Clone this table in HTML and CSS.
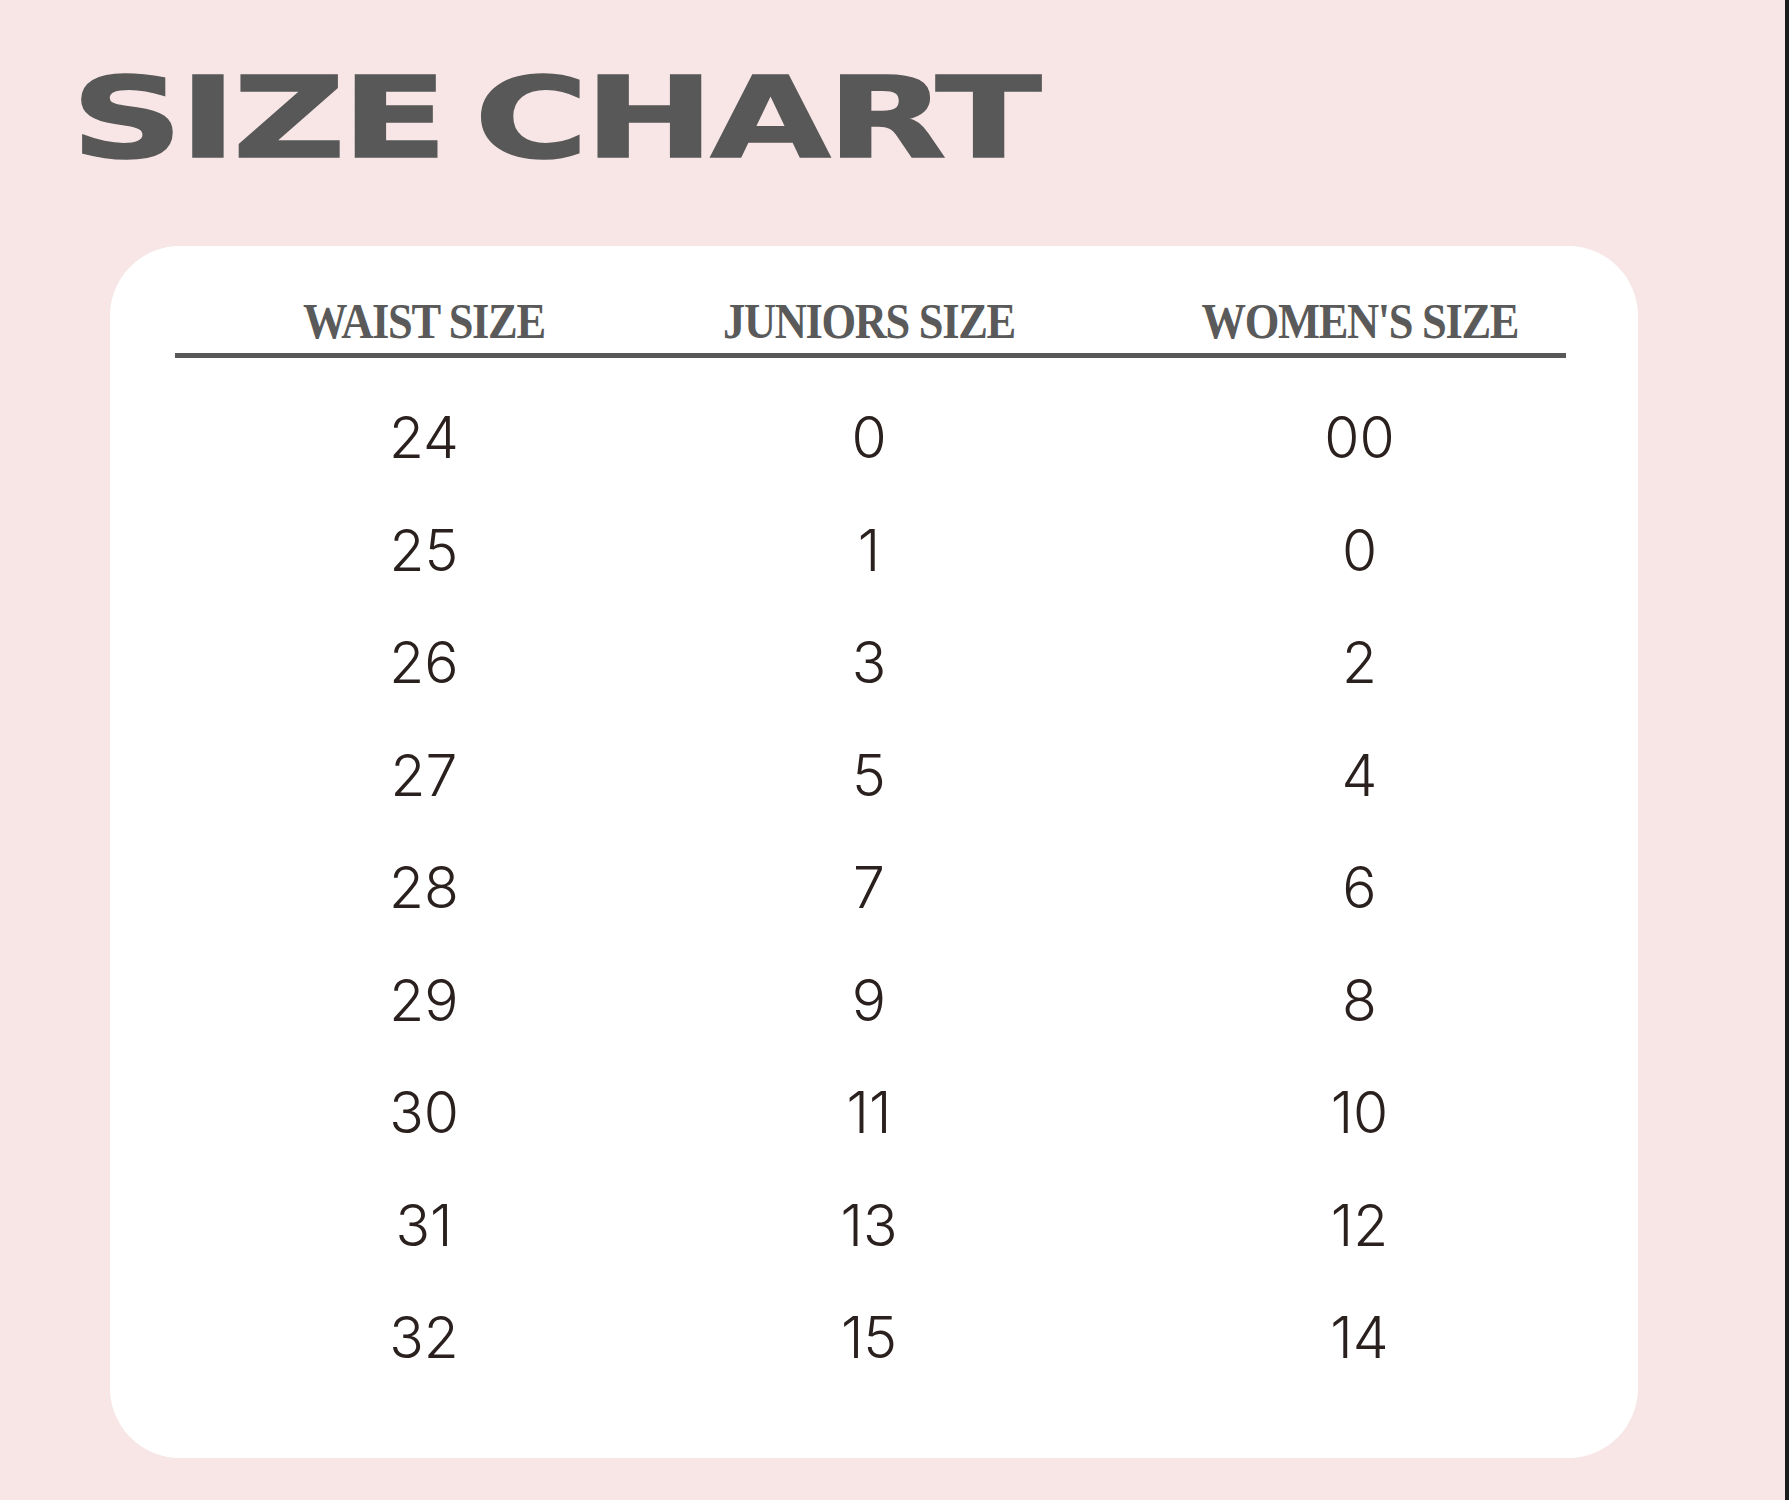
FILE: index.html
```html
<!DOCTYPE html>
<html lang="en">
<head>
<meta charset="utf-8">
<title>Size Chart</title>
<link rel="stylesheet" href="styles.css">
</head>
<body>
<main class="page">
  <h1 class="title"><span class="title-text">SIZE CHART</span></h1>
  <section class="card">
    <div class="table">
      <div class="head">
        <div class="cell c1"><span class="hd">WAIST SIZE</span></div>
        <div class="cell c2"><span class="hd">JUNIORS SIZE</span></div>
        <div class="cell c3"><span class="hd">WOMEN'S SIZE</span></div>
      </div>
      <div class="rows">
        <div class="row"><div class="cell c1">24</div><div class="cell c2">0</div><div class="cell c3">00</div></div>
        <div class="row"><div class="cell c1">25</div><div class="cell c2">1</div><div class="cell c3">0</div></div>
        <div class="row"><div class="cell c1">26</div><div class="cell c2">3</div><div class="cell c3">2</div></div>
        <div class="row"><div class="cell c1">27</div><div class="cell c2">5</div><div class="cell c3">4</div></div>
        <div class="row"><div class="cell c1">28</div><div class="cell c2">7</div><div class="cell c3">6</div></div>
        <div class="row"><div class="cell c1">29</div><div class="cell c2">9</div><div class="cell c3">8</div></div>
        <div class="row"><div class="cell c1">30</div><div class="cell c2">11</div><div class="cell c3">10</div></div>
        <div class="row"><div class="cell c1">31</div><div class="cell c2">13</div><div class="cell c3">12</div></div>
        <div class="row"><div class="cell c1">32</div><div class="cell c2">15</div><div class="cell c3">14</div></div>
      </div>
    </div>
  </section>
</main>
</body>
</html>
```

FILE: styles.css
```css
html, body {
  margin: 0;
  padding: 0;
}
body {
  background: #f8e6e7;
  width: 1789px;
  height: 1500px;
  overflow: hidden;
}
.page {
  box-sizing: border-box;
  width: 1789px;
  height: 1500px;
  border-right: 4px solid #1c1c1c;
  padding: 0 0 0 110px;
}
.title {
  margin: 0;
  padding: 62px 0 0 0;
  height: 246px;
  box-sizing: border-box;
  margin-left: -39px;
  font-family: "DejaVu Sans", sans-serif;
  font-weight: 700;
  font-size: 112px;
  line-height: 112px;
  color: #585858;
}
.title-text {
  display: inline-block;
  letter-spacing: -3px;
  word-spacing: -14px;
  -webkit-text-stroke: 1.5px #585858;
  transform: scaleX(1.39);
  transform-origin: left center;
}
.card {
  box-sizing: border-box;
  width: 1528px;
  height: 1212px;
  background: #ffffff;
  border-radius: 70px;
  padding: 48px 72px 0 65px;
}
.head, .row {
  display: grid;
  grid-template-columns: 498px 392px 501px;
}
.head {
  border-bottom: 5px solid #585858;
  height: 59px;
}
.cell {
  text-align: center;
}
.c3 {
  padding-left: 88px;
}
.hd {
  display: inline-block;
  font-family: "Liberation Serif", serif;
  font-weight: 700;
  font-size: 50px;
  line-height: 54px;
  letter-spacing: -1.5px;
  color: #5a5a5a;
  transform: scaleX(0.89);
}
.rows {
  padding-top: 24px;
}
.row {
  height: 112.5px;
  align-items: center;
  font-family: "Inter", sans-serif;
  font-weight: 300;
  font-size: 57px;
  line-height: 112px;
  color: #2a211f;
}
```
